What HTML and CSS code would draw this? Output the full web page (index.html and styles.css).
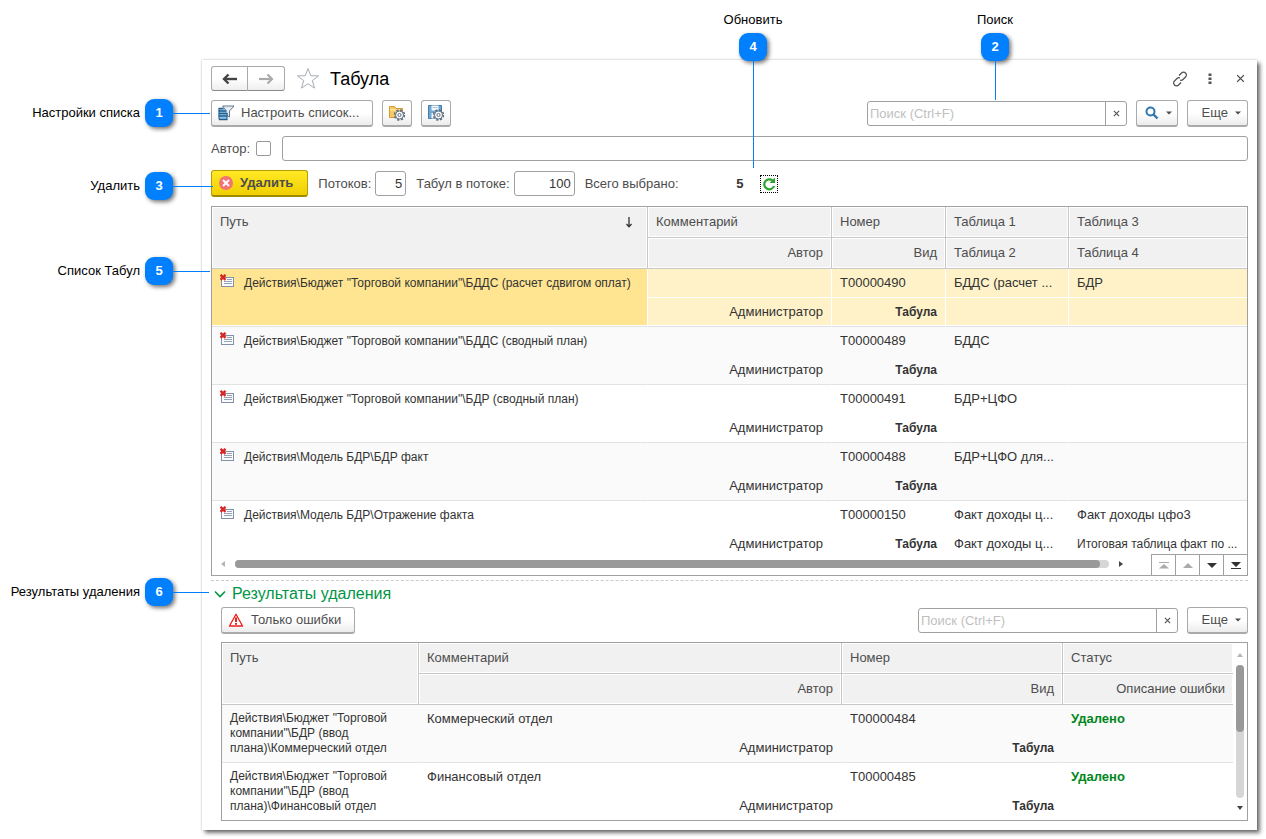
FILE: index.html
```html
<!DOCTYPE html>
<html lang="ru">
<head>
<meta charset="utf-8">
<title>Табула</title>
<link rel="stylesheet" href="styles.css">
</head>
<body>
<svg class="sprite" aria-hidden="true">
  <symbol id="doc" viewBox="0 0 16 14">
    <rect x="1.500" y="3.500" width="12" height="9" fill="#fafbfd" stroke="#8391a8"/>
    <path d="M7 5.500h5M4 7.500h8M4 9.500h8" stroke="#96a2b5"/>
    <path d="M.5 .8l5 5M5.500 .8l-5 5" stroke="#dc2626" stroke-width="2.400"/>
  </symbol>
  <symbol id="cross" viewBox="0 0 8 8"><path d="M1 1l6 6M7 1l-6 6" stroke="#4d4d4d" stroke-width="1.200" fill="none"/></symbol>
  <symbol id="caret" viewBox="0 0 6 4"><path d="M0 .5h6L3 3.500z" fill="#4d4d4d"/></symbol>
  <symbol id="gear" viewBox="0 0 12 12">
    <circle cx="6" cy="6" r="5" fill="none" stroke="#5d6d80" stroke-width="1.600" stroke-dasharray="2.200 1.727"/>
    <circle cx="6" cy="6" r="4" fill="#fff" stroke="#5d6d80"/>
    <circle cx="6" cy="6" r="1.600" fill="#fff" stroke="#5d6d80"/>
  </symbol>
</svg>
<main class="page">
  <section class="window">
    <header class="title-bar">
      <div class="nav">
        <button type="button" aria-label="Назад"><svg width="16" height="12" viewBox="0 0 16 12"><path d="M3 6h12" stroke="#444" stroke-width="2.400"/><path d="M6.500 1.500L2 6l4.500 4.500" fill="none" stroke="#444" stroke-width="2.400"/></svg></button>
        <button type="button" aria-label="Вперед"><svg width="16" height="12" viewBox="0 0 16 12"><path d="M1 6h12" stroke="#aaa" stroke-width="2.200"/><path d="M9.500 1.500L14 6l-4.500 4.500" fill="none" stroke="#aaa" stroke-width="2.200"/></svg></button>
      </div>
      <svg class="star" width="24" height="23" viewBox="0 0 24 23"><path d="M12 1.500l2.700 7.200 7.800.2-6.200 4.700 2.200 7.500L12 16.700l-6.500 4.400 2.200-7.500L1.500 8.900l7.800-.2z" fill="#fff" stroke="#a5adb5"/></svg>
      <h1>Табула</h1>
      <div class="window-tools">
        <button type="button" aria-label="Ссылка"><svg width="16" height="16" viewBox="0 0 16 16" fill="none" stroke="#4d4d4d" stroke-width="1.200"><path d="M7 4.500l2.500-2.500a2.700 2.700 0 0 1 4 0a2.700 2.700 0 0 1 0 4L11 8.500a2.700 2.700 0 0 1-3 .5M9 11.500L6.500 14a2.700 2.700 0 0 1-4 0a2.700 2.700 0 0 1 0-4L5 7.500a2.700 2.700 0 0 1 3-.5"/></svg></button>
        <button type="button" aria-label="Меню"><svg width="4" height="12" viewBox="0 0 4 12"><path d="M.5.500h3v2.500h-3zM.5 4.500h3v2.500h-3zM.5 8.500h3v2.500h-3z" fill="#555"/></svg></button>
        <button type="button" aria-label="Закрыть"><svg width="9" height="9"><use href="#cross"/></svg></button>
      </div>
    </header>

    <div class="toolbar">
      <button type="button" class="btn"><svg width="17" height="16" viewBox="0 0 17 16"><path d="M4.500 1h11.500l-4.500 5v6l-3-2V6z" fill="#e8edf2" stroke="#63788e"/><path d="M1 3h4.500l3.500 4v8H1z" fill="#8fc4e8"/><path d="M.5 3.500h5M.5 6h7.500M.5 8.500h9M.5 11h9M1 14.500h8.500" stroke="#245f8c" stroke-width="1.300"/><path d="M1 3.500v11M9 8v6.500" stroke="#245f8c"/></svg>Настроить список...</button>
      <button type="button" class="btn btn-icon" aria-label="Выбрать настройки"><svg width="18" height="18" viewBox="0 0 18 18"><path d="M1.500 13.500v-11h5l1.500 2h6.500v9z" fill="#f6cb66" stroke="#d49a2d"/><path d="M2 6h12" stroke="#fff0bd"/><use href="#gear" x="5.500" y="5" width="12" height="12"/></svg></button>
      <button type="button" class="btn btn-icon" aria-label="Сохранить настройки"><svg width="18" height="18" viewBox="0 0 18 18"><path d="M1.500 1.500h13v13h-13z" fill="#6ea7d2" stroke="#3f7cad"/><path d="M4.500 1.500h7v5h-7zM4.500 9h8v5.500h-8z" fill="#f3f7fa"/><path d="M5.500 3.500h5" stroke="#b4c7d6"/><use href="#gear" x="5.500" y="5" width="12" height="12"/></svg></button>
      <div class="search push">
        <input type="text" placeholder="Поиск (Ctrl+F)" aria-label="Поиск">
        <button type="button" aria-label="Очистить"><svg width="7" height="7"><use href="#cross"/></svg></button>
      </div>
      <button type="button" class="btn btn-find" aria-label="Найти"><svg width="14" height="14" viewBox="0 0 14 14"><circle cx="5.500" cy="5.500" r="4" fill="none" stroke="#2e77b0" stroke-width="2"/><path d="M8.500 8.500l4 4" stroke="#2e77b0" stroke-width="2.400"/></svg><svg width="6" height="4"><use href="#caret"/></svg></button>
      <button type="button" class="btn btn-more">Еще<svg width="6" height="4"><use href="#caret"/></svg></button>
    </div>

    <div class="author-row">
      <label for="author-on">Автор:</label>
      <input type="checkbox" id="author-on">
      <input type="text" class="field grow" aria-label="Автор">
    </div>

    <div class="delete-row">
      <button type="button" class="btn btn-delete"><svg width="14" height="14" viewBox="0 0 14 14"><circle cx="7" cy="7" r="7" fill="#f67272"/><path d="M4 4l6 6M10 4l-6 6" stroke="#fff" stroke-width="2"/></svg>Удалить</button>
      <label for="threads">Потоков:</label>
      <input type="text" class="field num" id="threads" value="5">
      <label for="per-thread">Табул в потоке:</label>
      <input type="text" class="field num wide" id="per-thread" value="100">
      <span>Всего выбрано:</span>
      <output class="total">5</output>
      <button type="button" class="refresh" aria-label="Обновить"><svg width="14" height="14" viewBox="0 0 14 14"><path d="M12 9A5 5 0 1 1 10.500 3.500" fill="none" stroke="#2ba52b" stroke-width="2.200"/><path d="M7.500 6H13V.5z" fill="#2ba52b"/></svg></button>
    </div>

    <div class="grid">
      <table class="list">
        <colgroup><col><col class="c-comment"><col class="c-number"><col class="c-t1"><col class="c-t3"></colgroup>
        <thead>
          <tr><th rowspan="2"><div class="sorted">Путь<svg width="8" height="11" viewBox="0 0 8 11"><path d="M4 0v10M1.500 7L4 9.700 6.500 7" fill="none" stroke="#333" stroke-width="1.300"/></svg></div></th><th>Комментарий</th><th>Номер</th><th>Таблица 1</th><th>Таблица 3</th></tr>
          <tr><th class="r">Автор</th><th class="r">Вид</th><th>Таблица 2</th><th>Таблица 4</th></tr>
        </thead>
        <tbody class="selected">
          <tr><td rowspan="2" class="path"><div><svg width="16" height="14"><use href="#doc"/></svg>Действия\Бюджет "Торговой компании"\БДДС (расчет сдвигом оплат)</div></td><td></td><td>Т00000490</td><td>БДДС (расчет ...</td><td>БДР</td></tr>
          <tr><td class="r">Администратор</td><td class="r kind">Табула</td><td></td><td></td></tr>
        </tbody>
        <tbody class="alt">
          <tr><td rowspan="2" class="path"><div><svg width="16" height="14"><use href="#doc"/></svg>Действия\Бюджет "Торговой компании"\БДДС (сводный план)</div></td><td></td><td>Т00000489</td><td>БДДС</td><td></td></tr>
          <tr><td class="r">Администратор</td><td class="r kind">Табула</td><td></td><td></td></tr>
        </tbody>
        <tbody>
          <tr><td rowspan="2" class="path"><div><svg width="16" height="14"><use href="#doc"/></svg>Действия\Бюджет "Торговой компании"\БДР (сводный план)</div></td><td></td><td>Т00000491</td><td>БДР+ЦФО</td><td></td></tr>
          <tr><td class="r">Администратор</td><td class="r kind">Табула</td><td></td><td></td></tr>
        </tbody>
        <tbody class="alt">
          <tr><td rowspan="2" class="path"><div><svg width="16" height="14"><use href="#doc"/></svg>Действия\Модель БДР\БДР факт</div></td><td></td><td>Т00000488</td><td>БДР+ЦФО для...</td><td></td></tr>
          <tr><td class="r">Администратор</td><td class="r kind">Табула</td><td></td><td></td></tr>
        </tbody>
        <tbody class="last">
          <tr><td rowspan="2" class="path"><div><svg width="16" height="14"><use href="#doc"/></svg>Действия\Модель БДР\Отражение факта</div></td><td></td><td>Т00000150</td><td>Факт доходы ц...</td><td>Факт доходы цфо3</td></tr>
          <tr><td class="r">Администратор</td><td class="r kind">Табула</td><td>Факт доходы ц...</td><td class="tight">Итоговая таблица факт по ...</td></tr>
        </tbody>
      </table>
      <div class="grid-foot">
        <div class="hscroll">
          <svg width="4" height="6" viewBox="0 0 4 6"><path d="M4 0v6L0 3z" fill="#b5b5b5"/></svg>
          <div class="track"><div class="thumb"></div></div>
          <svg width="4" height="6" viewBox="0 0 4 6"><path d="M0 0v6l4-3z" fill="#444"/></svg>
        </div>
        <div class="pager">
          <button type="button" disabled aria-label="В начало"><svg width="10" height="7" viewBox="0 0 10 7"><path d="M0 0h10v1H0zM0 6.500L5 2l5 4.500z" fill="#aaa"/></svg></button>
          <button type="button" disabled aria-label="Вверх"><svg width="10" height="7" viewBox="0 0 10 7"><path d="M0 6L5 1l5 5z" fill="#aaa"/></svg></button>
          <button type="button" aria-label="Вниз"><svg width="10" height="7" viewBox="0 0 10 7"><path d="M0 1h10L5 6z" fill="#333"/></svg></button>
          <button type="button" aria-label="В конец"><svg width="10" height="7" viewBox="0 0 10 7"><path d="M0 0h10L5 5zM0 6h10v1H0z" fill="#333"/></svg></button>
        </div>
      </div>
    </div>

    <section class="results">
      <h2><svg width="12" height="8" viewBox="0 0 12 8"><path d="M1 1.500l5 5 5-5" fill="none" stroke="#009646" stroke-width="1.600"/></svg>Результаты удаления</h2>
      <div class="results-body">
        <div class="toolbar">
          <button type="button" class="btn btn-errors"><svg width="16" height="14" viewBox="0 0 16 14"><path d="M8 1.200L14.500 13H1.500z" fill="#fff" stroke="#f01c1c" stroke-width="1.300" stroke-linejoin="round"/><path d="M8 4.500v4.500M8 10v1.800" stroke="#f01c1c" stroke-width="2"/></svg>Только ошибки</button>
          <div class="search push">
            <input type="text" placeholder="Поиск (Ctrl+F)" aria-label="Поиск по результатам">
            <button type="button" aria-label="Очистить"><svg width="7" height="7"><use href="#cross"/></svg></button>
          </div>
          <button type="button" class="btn btn-more">Еще<svg width="6" height="4"><use href="#caret"/></svg></button>
        </div>
        <div class="grid with-scroll">
          <table class="list">
            <colgroup><col class="r-path"><col><col class="r-number"><col class="r-status"></colgroup>
            <thead>
              <tr><th rowspan="2">Путь</th><th>Комментарий</th><th>Номер</th><th>Статус</th></tr>
              <tr><th class="r">Автор</th><th class="r">Вид</th><th class="r">Описание ошибки</th></tr>
            </thead>
            <tbody class="alt">
              <tr><td rowspan="2" class="path wrap">Действия\Бюджет "Торговой компании"\БДР (ввод плана)\Коммерческий отдел</td><td>Коммерческий отдел</td><td>Т00000484</td><td class="done">Удалено</td></tr>
              <tr><td class="r">Администратор</td><td class="r kind">Табула</td><td></td></tr>
            </tbody>
            <tbody class="end">
              <tr><td rowspan="2" class="path wrap">Действия\Бюджет "Торговой компании"\БДР (ввод плана)\Финансовый отдел</td><td>Финансовый отдел</td><td>Т00000485</td><td class="done">Удалено</td></tr>
              <tr><td class="r">Администратор</td><td class="r kind">Табула</td><td></td></tr>
            </tbody>
          </table>
          <div class="vscroll">
            <svg width="6" height="4" viewBox="0 0 6 4"><path d="M0 4h6L3 0z" fill="#b5b5b5"/></svg>
            <div class="track"><div class="thumb"></div></div>
            <svg width="6" height="4" viewBox="0 0 6 4"><path d="M0 0h6L3 4z" fill="#444"/></svg>
          </div>
        </div>
      </div>
    </section>
  </section>

  <div class="callout side n1"><span>Настройки списка</span><b>1</b><i></i></div>
  <div class="callout side n3"><span>Удалить</span><b>3</b><i></i></div>
  <div class="callout side n5"><span>Список Табул</span><b>5</b><i></i></div>
  <div class="callout side n6"><span>Результаты удаления</span><b>6</b><i></i></div>
  <div class="callout top n4"><span>Обновить</span><b>4</b><i></i></div>
  <div class="callout top n2"><span>Поиск</span><b>2</b><i></i></div>
</main>
</body>
</html>
```

FILE: styles.css
```css
* { box-sizing: border-box; }
body {
  margin: 0;
  background: #fff;
  color: #333;
  font: 13px/16px "Liberation Sans", Arial, sans-serif;
}
button, input { font: inherit; color: inherit; margin: 0; }
button { padding: 0; border: 0; background: none; }
svg { flex: none; display: block; }
h1, h2 { margin: 0; font-weight: normal; }
.sprite { display: none; }

.page { position: relative; padding: 60px 9px 9px 202px; }
.window {
  display: flex;
  flex-direction: column;
  padding: 6px 9px 9px;
  background: #fff;
  box-shadow: 0 0 2px rgba(0, 0, 0, .25), 3px 3px 4px rgba(0, 0, 0, .55);
}

.title-bar { display: flex; align-items: center; height: 25px; }
.nav { display: flex; }
.nav button {
  display: grid;
  place-items: center;
  width: 37px;
  height: 25px;
  border: 1px solid #aaa;
  border-bottom-color: #888;
  border-radius: 3px 0 0 3px;
  background: linear-gradient(#fff 50%, #eee);
}
.nav button + button { border-left: 0; border-radius: 0 3px 3px 0; }
.star { margin: 0 10px 0 11px; }
h1 { font-size: 18px; line-height: 24px; color: #000; }
.window-tools { display: flex; align-items: center; gap: 20px; margin: 0 3px 0 auto; }
.window-tools button:last-child { margin-left: 4px; }

.toolbar { display: flex; align-items: center; gap: 9px; margin-top: 9px; }
.push { margin-left: auto; }
.btn {
  display: flex;
  align-items: center;
  gap: 6px;
  height: 27px;
  padding: 0 13px 0 6px;
  border: 1px solid #aaa;
  border-bottom: 2px solid #aaa;
  border-radius: 3px;
  background: linear-gradient(#fff 50%, #ececec);
  color: #4d4d4d;
  white-space: nowrap;
}
.toolbar .btn-icon { padding: 0 5px; }
.btn-find { padding: 0 7px 0 8px; gap: 7px; width: 42px; }
.btn-more { width: 61px; padding: 0 6px 0 12px; justify-content: flex-end; gap: 7px; }
.btn-errors { gap: 7px; }
.search {
  display: flex;
  width: 260px;
  height: 25px;
  border: 1px solid #a0a0a0;
  border-radius: 3px;
}
.search input { flex: 1; min-width: 0; border: 0; padding: 0 2px; background: none; }
.search input::placeholder { color: #bfbfbf; opacity: 1; }
.search button { display: grid; place-items: center; width: 21px; border-left: 1px solid #a0a0a0; }

.field {
  height: 25px;
  padding: 0 3px;
  border: 1px solid #a0a0a0;
  border-radius: 3px;
  background: #fff;
}
.grow { flex: 1; }
.author-row, .delete-row { display: flex; align-items: center; margin-top: 9px; color: #4d4d4d; }
.author-row input[type="checkbox"] {
  appearance: none;
  width: 15px;
  height: 15px;
  margin: 0 11px 0 6px;
  border: 1px solid #999;
  border-radius: 2px;
}
.delete-row { gap: 10px; }
.num { width: 31px; margin-left: -6px; text-align: right; color: #333; }
.wide { width: 61px; }
.btn-delete {
  gap: 7px;
  padding: 0 14px 0 7px;
  border-color: #b89c00;
  border-bottom-color: #a08a00;
  background: linear-gradient(#ffe926, #f0cf00);
  font-weight: bold;
}
.total { width: 55px; text-align: right; font-weight: bold; color: #333; }
.refresh {
  display: grid;
  place-items: center;
  width: 18px;
  height: 18px;
  margin-left: 6px;
  border: 1px dotted #000;
}

.grid { margin-top: 9px; border: 1px solid #a0a0a0; }
.list { width: 100%; table-layout: fixed; border-collapse: separate; border-spacing: 0; }
.c-comment { width: 184px; }
.c-number { width: 114px; }
.c-t1 { width: 123px; }
.c-t3 { width: 178px; }
.r-path { width: 197px; }
.r-number { width: 221px; }
.r-status { width: 170px; }
th, td {
  padding: 6px 8px;
  vertical-align: top;
  text-align: left;
  font-weight: normal;
  white-space: nowrap;
}
th {
  height: 31px;
  padding-top: 7px;
  border-right: 1px solid #c8c8c8;
  border-bottom: 1px solid #c8c8c8;
  background: #f1f1f1;
  box-shadow: inset 0 0 0 1px #fff;
  color: #4d4d4d;
}
tr:first-child > :last-child, tr:last-child > :last-child { border-right: 0; }
td { height: 29px; border-right: 1px solid transparent; }
tr:last-child td, td.path { border-bottom: 1px solid #e2e2e2; }
.r { text-align: right; }
.kind { font-size: 12px; font-weight: bold; }
.done { font-weight: bold; color: #00871b; }
.sorted { display: flex; justify-content: space-between; align-items: center; padding-right: 6px; }
.path { font-size: 12px; }
.path div { display: flex; gap: 8px; }
.path svg { margin-top: -1px; }
.path.wrap { white-space: normal; line-height: 15px; }
.alt td { background: #fafafa; }
.selected td { background: #fff2c8; border-right-color: #fff; box-shadow: inset 0 -1px #fff; }
.selected td.path { background: #ffe591; }
.last tr:last-child td { height: 24px; padding-bottom: 2px; }
.last tr td, .end tr td, .last tr td.path, .end tr td.path { border-bottom: 0; }
.end tr:last-child td { height: 28px; }
.tight { padding-right: 0; font-size: 12px; }

.grid-foot { display: flex; height: 21px; }
.hscroll { flex: 1; display: flex; align-items: center; gap: 10px; padding: 0 28px 1px 9px; }
.track { border-radius: 4px; background: #d6d6d6; }
.thumb { border-radius: 4px; background: #999; }
.hscroll .track { flex: 1; height: 8px; }
.hscroll .thumb { width: 99%; height: 8px; }
.pager { display: flex; }
.pager button {
  display: grid;
  place-items: center;
  width: 24px;
  border-top: 1px solid #a0a0a0;
  border-left: 1px solid #a0a0a0;
}

.results { margin-top: 4px; border-top: 1px dashed #ccc; }
h2 { display: flex; align-items: center; gap: 6px; padding-left: 3px; height: 26px; font-size: 16px; color: #009646; }
.results-body { padding-left: 10px; }
.results .toolbar { margin-top: 0; }
.with-scroll { display: flex; margin-top: 8px; }
.with-scroll .list { flex: 1; min-width: 0; }
.vscroll { display: flex; flex-direction: column; align-items: center; gap: 8px; width: 14px; padding: 10px 0; }
.vscroll .track { flex: 1; width: 8px; }
.vscroll .thumb { width: 8px; height: 50%; }

.callout { position: absolute; display: flex; align-items: center; color: #000; white-space: nowrap; }
.callout b {
  display: grid;
  place-items: center;
  width: 28px;
  height: 28px;
  border-radius: 9px;
  background: #007fff;
  box-shadow: 2px 2px 4px rgba(0, 0, 0, .55);
  color: #fff;
}
.callout i { background: #007fff; }
.side { left: 0; }
.side span { width: 140px; margin-right: 5px; text-align: right; }
.side i { width: 37px; height: 1px; }
.n1 { top: 99px; }
.n3 { top: 172px; }
.n3 i { width: 40px; }
.n5 { top: 257px; }
.n6 { top: 578px; }
.n6 i { width: 36px; }
.top { top: 12px; flex-direction: column; width: 80px; }
.top b { margin-top: 5px; }
.top i { width: 1px; height: 39px; }
.n4 { left: 713px; }
.n4 i { height: 107px; }
.n2 { right: 231px; }
```
